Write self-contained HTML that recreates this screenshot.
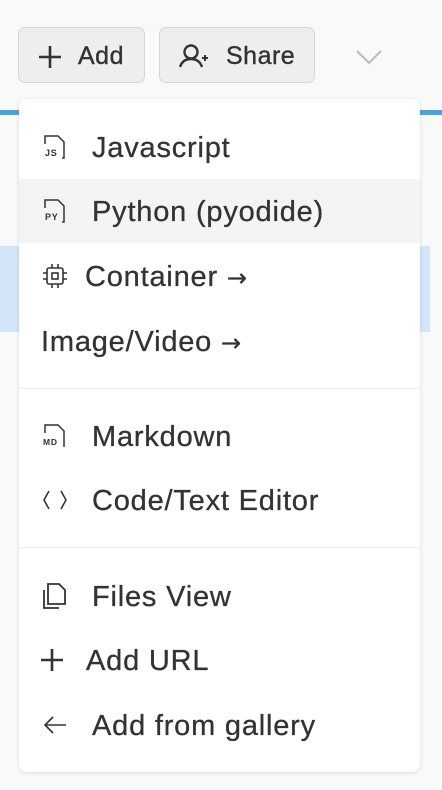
<html><head><style>
body{margin:0;width:442px;height:790px;background:#f9f9f9;font-family:"Liberation Sans",sans-serif;color:#333;position:relative;overflow:hidden}
.btn{position:absolute;top:27px;height:56px;background:#eee;border:1px solid #d6d6d6;border-radius:7px;box-sizing:border-box;font-size:25px;line-height:56px;letter-spacing:0.5px;-webkit-text-stroke:0.4px #333}
.bar{position:absolute;left:0;right:0;top:110px;height:5px;background:#58a0cc}
.band{position:absolute;left:0;width:430px;top:246px;height:86px;background:#d3e5f8}
.menu{position:absolute;left:19px;top:99px;width:401px;height:673px;background:#fff;border-radius:8px;box-shadow:0 1px 4px rgba(0,0,0,.12)}
.it{position:absolute;left:0;right:0;height:64px;line-height:66px;font-size:29px;letter-spacing:0.8px;-webkit-text-stroke:0.3px #333}
.it svg{position:absolute;top:50%;transform:translateY(-50%)}
.ar{font-family:"DejaVu Sans",sans-serif;font-size:24px}
.sep{position:absolute;left:0;right:0;height:1px;background:#eee}
</style></head><body>
<div class="bar"></div><div class="band"></div>
<div class="btn" style="left:18px;width:127px"><svg style="position:absolute;left:18px;top:16px" width="26" height="26" viewBox="0 0 26 26"><path d="M13 2v22M2 13h22" stroke="#333" stroke-width="2.6"/></svg><span style="position:absolute;left:59px">Add</span></div>
<div class="btn" style="left:159px;width:156px"><svg style="position:absolute;left:19px;top:15px" width="32" height="26" viewBox="0 0 32 26"><circle cx="12" cy="9" r="6.5" fill="none" stroke="#333" stroke-width="2.4"/><path d="M1 24c2-6 6-8 11-8s9 2 11 8" fill="none" stroke="#333" stroke-width="2.4"/><path d="M26 12v6M23 15h6" stroke="#333" stroke-width="2"/></svg><span style="position:absolute;left:66px">Share</span></div>
<svg style="position:absolute;left:355px;top:49px" width="28" height="16" viewBox="0 0 28 16"><path d="M2 2l12 12 12-12" fill="none" stroke="#bbb" stroke-width="2"/></svg>
<div class="menu">
<div class="it" style="top:16px"><svg style="left:24px" width="24" height="26" viewBox="0 0 24 26"><path d="M2 10V2h13l6 6v16h-2" fill="none" stroke="#333" stroke-width="1.5"/><text x="2" y="22" font-size="9" font-family="Liberation Sans" font-weight="bold" fill="#333">JS</text></svg><span style="position:absolute;left:73px">Javascript</span></div>
<div class="it" style="top:80px;background:#f4f4f4"><svg style="left:24px" width="24" height="26" viewBox="0 0 24 26"><path d="M2 10V2h13l6 6v16h-2" fill="none" stroke="#333" stroke-width="1.5"/><text x="2" y="22" font-size="9" font-family="Liberation Sans" font-weight="bold" fill="#333">PY</text></svg><span style="position:absolute;left:73px">Python (pyodide)</span></div>
<div class="it" style="top:145px"><svg style="left:23px" width="26" height="26" viewBox="0 0 26 26"><rect x="5" y="5" width="16" height="16" rx="2" fill="none" stroke="#333" stroke-width="1.6"/><rect x="10" y="10" width="6" height="6" fill="none" stroke="#333" stroke-width="1.6"/><path d="M10 1v4M16 1v4M10 21v4M16 21v4M1 10h4M1 16h4M21 10h4M21 16h4" stroke="#333" stroke-width="1.6"/></svg><span style="position:absolute;left:66px">Container <span class="ar">→</span></span></div>
<div class="it" style="top:210px"><span style="position:absolute;left:22px">Image/Video <span class="ar">→</span></span></div>
<div class="sep" style="top:289px"></div>
<div class="it" style="top:305px"><svg style="left:24px" width="24" height="26" viewBox="0 0 24 26"><path d="M2 10V2h13l6 6v16" fill="none" stroke="#333" stroke-width="1.5"/><text x="0" y="22" font-size="8.5" font-family="Liberation Sans" font-weight="bold" fill="#333">MD</text></svg><span style="position:absolute;left:73px">Markdown</span></div>
<div class="it" style="top:369px"><svg style="left:23px" width="26" height="26" viewBox="0 0 26 26"><path d="M7 4L2 13l5 9M19 4l5 9-5 9" fill="none" stroke="#333" stroke-width="1.6"/></svg><span style="position:absolute;left:73px">Code/Text Editor</span></div>
<div class="sep" style="top:448px"></div>
<div class="it" style="top:465px"><svg style="left:23px" width="26" height="28" viewBox="0 0 26 28"><path d="M2 8v18h15" fill="none" stroke="#333" stroke-width="1.8"/><path d="M6 22V2h11l6 6v14z" fill="none" stroke="#333" stroke-width="1.8"/></svg><span style="position:absolute;left:73px">Files View</span></div>
<div class="it" style="top:529px"><svg style="left:21px" width="24" height="24" viewBox="0 0 24 24"><path d="M12 1v22M1 12h22" stroke="#333" stroke-width="2.6"/></svg><span style="position:absolute;left:67px">Add URL</span></div>
<div class="it" style="top:594px"><svg style="left:24px" width="24" height="20" viewBox="0 0 24 20"><path d="M23 10H2M10 2l-8 8 8 8" fill="none" stroke="#333" stroke-width="1.6"/></svg><span style="position:absolute;left:73px">Add from gallery</span></div>
</div>
</body></html>
